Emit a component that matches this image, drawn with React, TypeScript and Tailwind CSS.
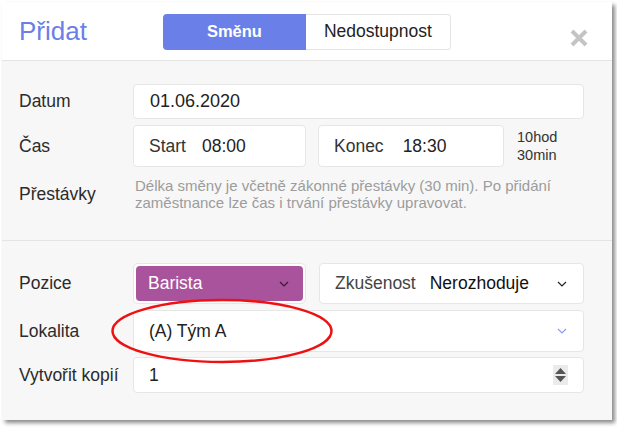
const font = { fontFamily: '"Liberation Sans", Arial, sans-serif' };

function Chevron({ className }: { className?: string }) {
  return (
    <svg width="10" height="6" viewBox="0 0 10 6" className={className}>
      <polyline points="1,1 5,5 9,1" fill="none" stroke="currentColor" strokeWidth="1.2" />
    </svg>
  );
}

function Label({ children }: { children: React.ReactNode }) {
  return <div className="w-[114px] shrink-0 text-[17.5px] text-[#2b2b2b]">{children}</div>;
}

const box = 'bg-white border border-[#e6e6e6] rounded-[4px] flex items-center';

export default function App() {
  return (
    <div className="relative min-h-screen bg-white" style={font}>
      <div className="ml-[2px] mt-[2px] w-[610px] h-[418px] bg-[#f7f7f7] shadow-[3px_3px_4px_rgba(0,0,0,0.45)] flex flex-col">
        {/* header */}
        <div className="h-[59px] bg-white border-b border-[#e4e4e4] flex items-center pl-[17px] pr-[24px]">
          <h1 className="text-[26px] text-[#6b7fe6] leading-none">Přidat</h1>
          <div className="ml-[76px] flex h-[36px] mt-[1px]">
            <button className="w-[143px] bg-[#6a7fe8] text-white font-bold text-[16.5px] rounded-l-[4px]">
              Směnu
            </button>
            <button className="w-[145px] bg-white border border-[#e4e4e4] border-l-0 text-[#222] text-[17.5px] rounded-r-[4px]">
              Nedostupnost
            </button>
          </div>
          <svg width="18" height="18" viewBox="0 0 18 18" className="ml-auto mt-[14px]">
            <path d="M2 2 L16 16 M16 2 L2 16" stroke="#c4c4c4" strokeWidth="4" />
          </svg>
        </div>

        {/* section 1 */}
        <div className="pl-[17px] pr-[28px] pt-[23px] pb-[29px] border-b border-[#e4e4e4]">
          <div className="flex items-center h-[35px]">
            <Label>Datum</Label>
            <div className={`${box} flex-1 h-full pl-[16px] text-[18px] text-[#222]`}>01.06.2020</div>
          </div>
          <div className="flex items-center h-[42px] mt-[6px]">
            <Label>Čas</Label>
            <div className={`${box} w-[173px] h-full pl-[15px] text-[17.5px] text-[#222] gap-[16px]`}>
              <span className="text-[#333]">Start</span>
              <span>08:00</span>
            </div>
            <div className={`${box} w-[186px] h-full ml-[12px] pl-[15px] text-[17.5px] text-[#222] gap-[19px]`}>
              <span className="text-[#333]">Konec</span>
              <span>18:30</span>
            </div>
            <div className="ml-[13px] text-[14.5px] leading-[18px] text-[#333]">
              10hod
              <br />
              30min
            </div>
          </div>
          <div className="flex items-center mt-[10px]">
            <Label>Přestávky</Label>
            <p className="pl-[2px] text-[15px] leading-[17px] text-[#9c9c9c] whitespace-nowrap">
              Délka směny je včetně zákonné přestávky (30 min). Po přidání
              <br />
              zaměstnance lze čas i trvání přestávky upravovat.
            </p>
          </div>
        </div>

        {/* section 2 */}
        <div className="pl-[17px] pr-[28px] pt-[22px]">
          <div className="flex items-center h-[41px]">
            <Label>Pozice</Label>
            <div className="w-[173px] h-full border border-[#e6e6e6] rounded-[5px] p-[2px] bg-white">
              <div className="h-full bg-[#a8539b] rounded-[4px] flex items-center pl-[12px] pr-[14px] text-white text-[17.5px]">
                Barista
                <Chevron className="ml-auto text-[#3a1a35]" />
              </div>
            </div>
            <div className={`${box} flex-1 h-full ml-[13px] pl-[15px] pr-[16px] text-[17.5px]`}>
              <span className="text-[#444]">Zkušenost</span>
              <span className="ml-[14px] text-[#111]">Nerozhoduje</span>
              <Chevron className="ml-auto text-[#222]" />
            </div>
          </div>
          <div className="flex items-center h-[42px] mt-[6px]">
            <Label>Lokalita</Label>
            <div className={`${box} flex-1 h-full pl-[15px] pr-[16px] text-[17.5px] text-[#222]`}>
              (A) Tým A
              <Chevron className="ml-auto text-[#8a9cf0]" />
            </div>
          </div>
          <div className="flex items-center h-[36px] mt-[5px]">
            <Label>Vytvořit kopií</Label>
            <div className={`${box} flex-1 h-full pl-[15px] pr-[15px] text-[17.5px] text-[#222]`}>
              1
              <div className="ml-auto w-[15px] h-[20px] bg-[#ebebeb] flex flex-col items-center justify-center gap-[2px]">
                <svg width="11" height="6" viewBox="0 0 11 6">
                  <polygon points="5.5,0 11,6 0,6" fill="#555" />
                </svg>
                <svg width="11" height="6" viewBox="0 0 11 6">
                  <polygon points="0,0 11,0 5.5,6" fill="#555" />
                </svg>
              </div>
            </div>
          </div>
        </div>
      </div>

      {/* annotation */}
      <svg className="absolute left-0 top-0 pointer-events-none" width="617" height="427">
        <ellipse cx="222" cy="329" rx="109.5" ry="31" fill="none" stroke="#ee1111" strokeWidth="2.5" />
      </svg>
    </div>
  );
}
